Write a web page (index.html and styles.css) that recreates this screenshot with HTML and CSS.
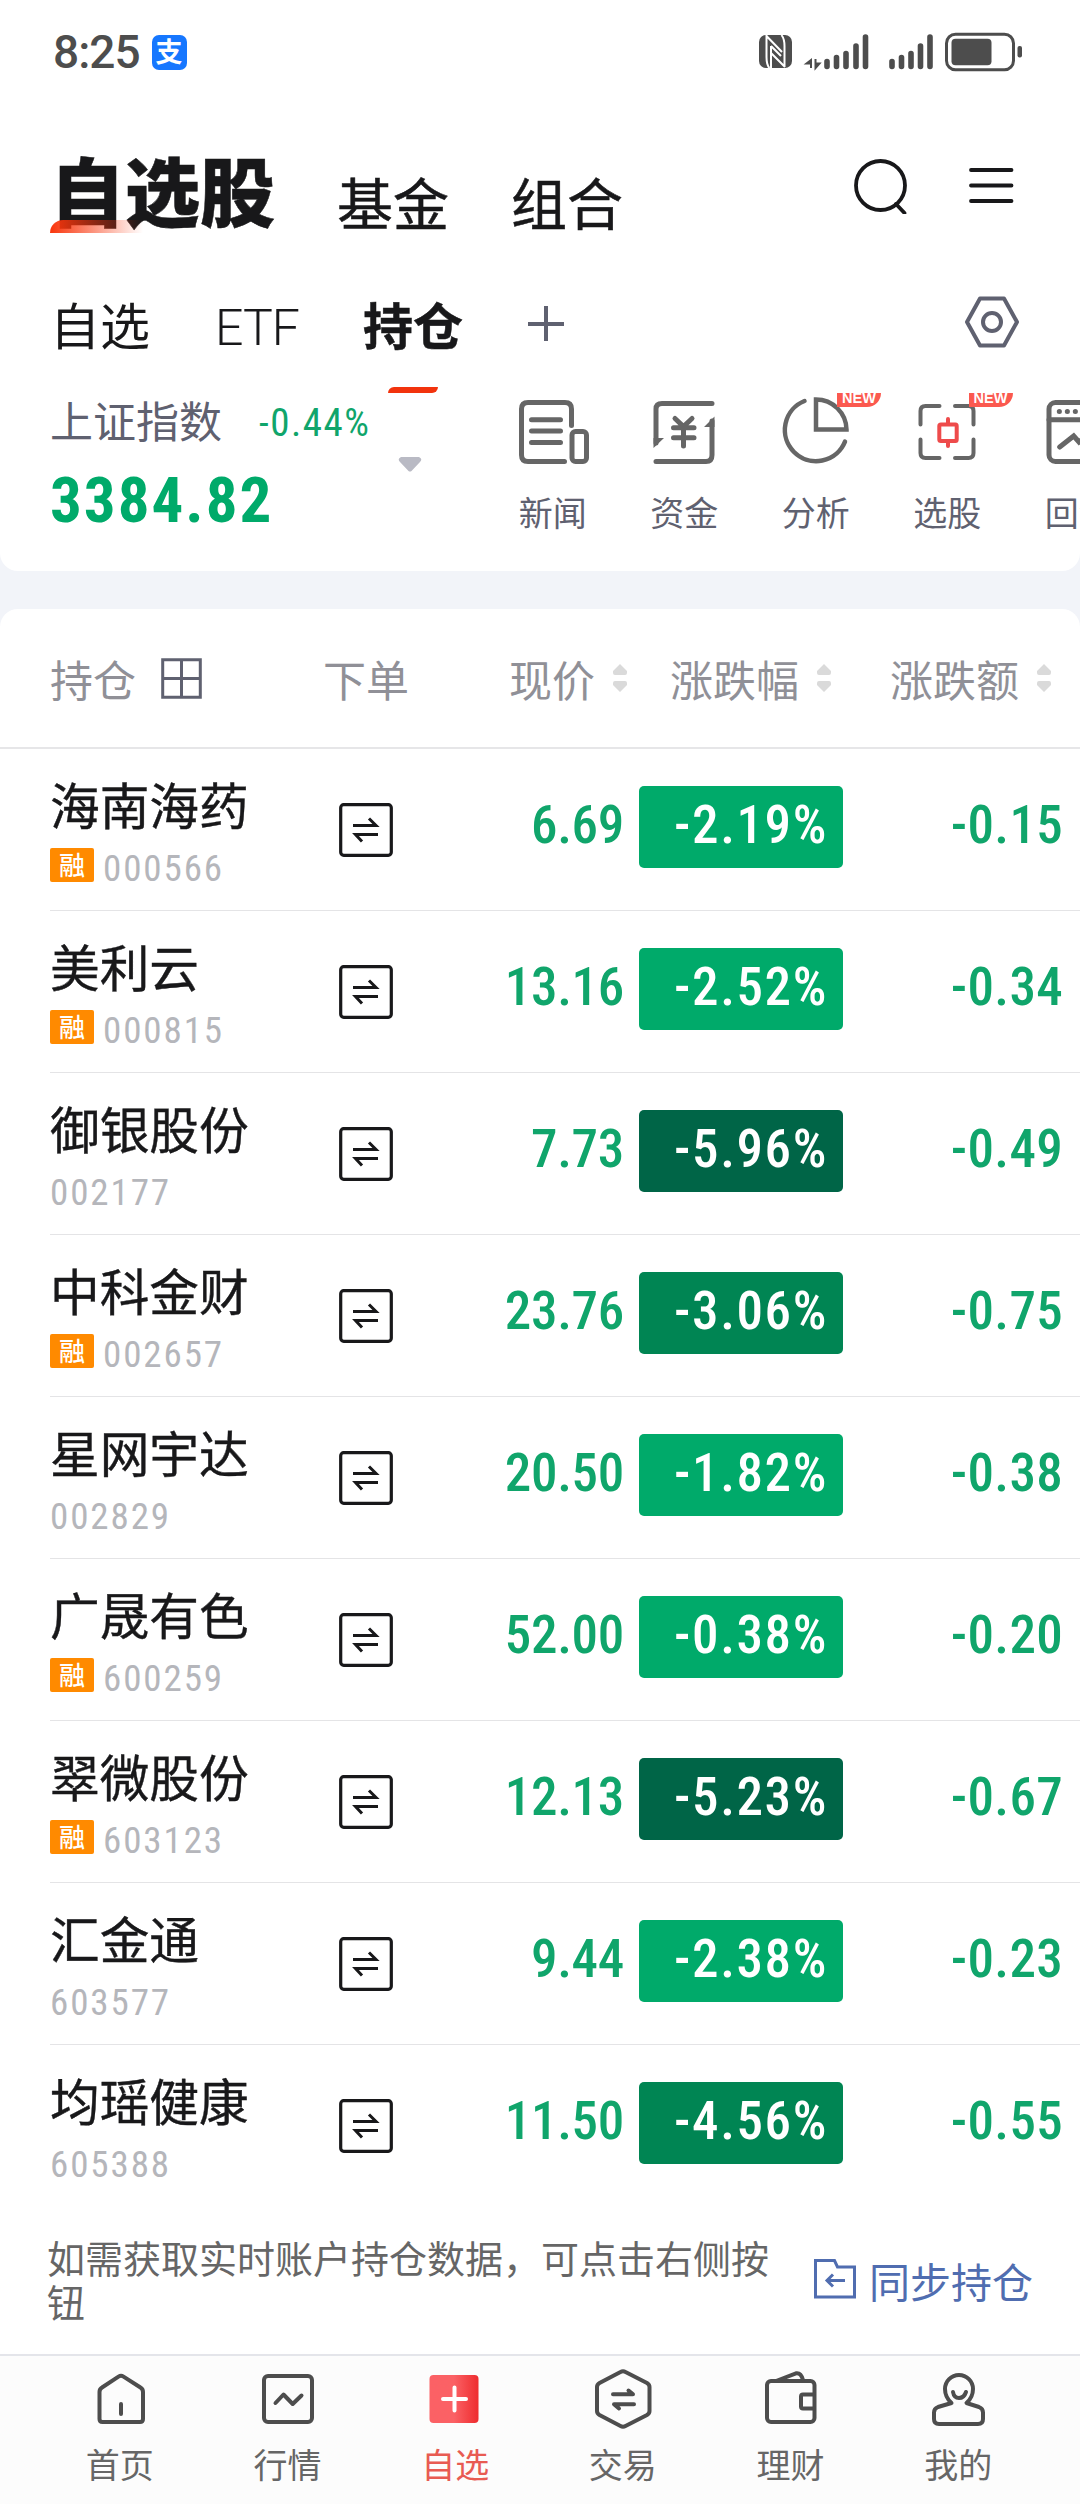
FILE: index.html
```
<!DOCTYPE html>
<html lang="zh-CN">
<head>
  <meta charset="UTF-8">
  <meta name="viewport" content="width=device-width, initial-scale=1.0">
  <title>自选股 - 持仓</title>
  <link rel="stylesheet" href="styles.css">
</head>
<body>
  <!-- 公用图标 -->
  <svg class="sprite" width="0" height="0">
    <symbol id="swap" viewBox="0 0 54 54">
      <rect x="1.7" y="1.7" width="50.6" height="50.6" rx="3" fill="none" stroke="#18181a" stroke-width="3.2"/>
      <path d="M14 22.5H37L30 15.5M39 31.5H16.500L23 38.500" fill="none" stroke="#18181a" stroke-width="3"/>
    </symbol>
    <symbol id="sort" viewBox="0 0 14 28">
      <path d="M7 0L14 7V9Q14 11 12 11H2Q0 11 0 9V7ZM7 28L14 21V19Q14 17 12 17H2Q0 17 0 19V21Z" fill="#dadada"/>
    </symbol>
  </svg>

  <div class="top-card">
    <!-- 状态栏 -->
    <div class="status-bar">
      <span class="time">8:25</span>
      <span class="alipay">支</span>
      <svg class="status-icons" width="270" height="40" viewBox="0 0 270 40">
        <rect x="5" y="3" width="33" height="33" rx="7" fill="#4d4d4d"/>
        <path d="M12.500 3V25Q12.500 33 15.500 36M12.500 4L28 20M17 36V14M17 14L27 24M17 21L31 35M30.500 35V14Q30.500 7 27.500 3" fill="none" stroke="#fff" stroke-width="2"/>
        <path d="M57 36V28L52.500 31.500H57M61.500 27V36L65.500 31.500H61.500" fill="#4d4d4d" stroke="#4d4d4d" stroke-width="2"/>
        <path d="M73 29.500V34.500M82.500 25.500V34.500M92 21.500V34.500M102 14V34.500M111.500 5V34.500M138 29.500V34.500M147.500 25.500V34.500M157 21.500V34.500M166.500 14V34.500M176 5V34.500" stroke="#4d4d4d" stroke-width="5.600" stroke-linecap="round"/>
        <rect x="192.500" y="2.200" width="67" height="35.600" rx="9" fill="none" stroke="#4d4d4d" stroke-width="3"/>
        <rect x="197.500" y="6.800" width="40" height="26.500" rx="4" fill="#4d4d4d"/>
        <rect x="263.500" y="14" width="4.500" height="11.500" rx="2" fill="#4d4d4d"/>
      </svg>
    </div>

    <!-- 标题栏 -->
    <div class="title-bar">
      <span class="title active">自选股</span>
      <span class="title">基金</span>
      <span class="title">组合</span>
      <svg class="title-icons" width="166" height="56" viewBox="0 0 166 56">
        <circle cx="30.500" cy="27.500" r="24.500"/>
        <path d="M46 46L54.500 55M121 12H161.500M121 27.500H161.500M121 43H161.500"/>
      </svg>
    </div>

    <!-- 分组 -->
    <div class="tabs">
      <span class="tab">自选</span>
      <span class="tab etf">ETF</span>
      <span class="tab active">持仓</span>
      <svg class="add" width="36" height="36" viewBox="0 0 36 36"><path d="M0 19H36M18 1V36"/></svg>
      <svg class="setting" width="56" height="52" viewBox="0 0 56 52">
        <path d="M16 2.500H40L53 26L40 49.500H16L3 26Z"/>
        <circle cx="28" cy="26" r="9"/>
      </svg>
    </div>

    <!-- 指数和工具 -->
    <div class="index-row">
      <div class="index">
        <div class="index-name">上证指数<span class="index-rate">-0.44%</span></div>
        <div class="index-value">3384.82</div>
      </div>
      <svg class="arrow" width="24" height="15" viewBox="0 0 24 15"><path d="M3 0H21Q25 2 22 5L13.500 14Q12 15 10.500 14L2 5Q-1 2 3 0Z" fill="#b9bac4"/></svg>
      <div class="tools">
        <div class="tool">
          <svg width="80" height="80" viewBox="0 0 80 80">
            <path d="M58.500 32.500V16Q58.500 9.500 52 9.500H15Q8.500 9.500 8.500 16V62Q8.500 68.500 15 68.500H51.500M18.500 26.700H47.500M18.500 38H47.500M18.500 49.500H47.500"/>
            <rect x="59" y="38.500" width="14.500" height="30" rx="3.500"/>
          </svg>
          <span>新闻</span>
        </div>
        <div class="tool">
          <svg width="80" height="80" viewBox="0 0 80 80">
            <path d="M68 10.500H18Q12 10.500 12 16V50M12 68.500H62Q68 68.500 68 62V28M31 25.500L39.500 33.500L48 25.500M39.500 33.500V53M29.500 34.700H50M29.500 44.700H50"/>
            <path d="M9.500 45H20L9.500 55ZM70.500 23.500V34H60Z" class="solid"/>
          </svg>
          <span>资金</span>
        </div>
        <div class="tool">
          <svg width="80" height="80" viewBox="0 0 80 80">
            <path d="M28.500 8A31.200 31.200 0 1 0 69 48.700M40 6.500V36.500H70.500A30.500 30.500 0 0 0 40 6.500Z" stroke-width="4.500"/>
          </svg>
          <span>分析</span>
          <b class="new">NEW</b>
        </div>
        <div class="tool">
          <svg width="80" height="80" viewBox="0 0 80 80">
            <path d="M32.500 13H18.500Q13.500 13 13.500 18V31.500M48 13H61.500Q66.500 13 66.500 18V31.500M13.500 46.500V60Q13.500 65 18.500 65H32.500M48 65H61.500Q66.500 65 66.500 60V46.500" stroke-width="4"/>
            <path d="M41 26V31.500M41 48V53M34 31.500H48.500Q49.700 31.500 49.700 33V46.500Q49.700 48 48.500 48H34Q32.300 48 32.300 46.500V33Q32.300 31.500 34 31.500Z" class="red" stroke-width="4"/>
          </svg>
          <span>选股</span>
          <b class="new">NEW</b>
        </div>
        <div class="tool">
          <svg width="80" height="80" viewBox="0 0 80 80">
            <rect x="10" y="9.500" width="60" height="59" rx="6.500"/>
            <path d="M10 26.700H70M20.700 54L34.700 43L40 49L56 36M20.300 18.600H20.400M28.300 18.600H28.400M36.300 18.600H36.400"/>
          </svg>
          <span>回测</span>
        </div>
      </div>
    </div>
  </div>

  <!-- 持仓列表 -->
  <div class="list-card">
    <div class="list-head">
      <div>持仓<svg class="grid-icon" width="41" height="41" viewBox="0 0 41 41"><path d="M1.700 1.700H39.300V39.300H1.700ZM20.500 1.700V39.300M1.700 20.500H39.300"/></svg></div>
      <div class="center">下单</div>
      <div class="right">现价<svg width="14" height="28"><use href="#sort"/></svg></div>
      <div class="right">涨跌幅<svg width="14" height="28"><use href="#sort"/></svg></div>
      <div class="right">涨跌额<svg width="14" height="28"><use href="#sort"/></svg></div>
    </div>

    <div class="row">
      <div class="stock"><div class="name">海南海药</div><div class="code"><i>融</i>000566</div></div>
      <svg class="swap" width="54" height="54"><use href="#swap"/></svg>
      <div class="price">6.69</div>
      <div class="rate">-2.19%</div>
      <div class="diff">-0.15</div>
    </div>
    <div class="row">
      <div class="stock"><div class="name">美利云</div><div class="code"><i>融</i>000815</div></div>
      <svg class="swap" width="54" height="54"><use href="#swap"/></svg>
      <div class="price">13.16</div>
      <div class="rate">-2.52%</div>
      <div class="diff">-0.34</div>
    </div>
    <div class="row">
      <div class="stock"><div class="name">御银股份</div><div class="code">002177</div></div>
      <svg class="swap" width="54" height="54"><use href="#swap"/></svg>
      <div class="price">7.73</div>
      <div class="rate deep">-5.96%</div>
      <div class="diff">-0.49</div>
    </div>
    <div class="row">
      <div class="stock"><div class="name">中科金财</div><div class="code"><i>融</i>002657</div></div>
      <svg class="swap" width="54" height="54"><use href="#swap"/></svg>
      <div class="price">23.76</div>
      <div class="rate mid">-3.06%</div>
      <div class="diff">-0.75</div>
    </div>
    <div class="row">
      <div class="stock"><div class="name">星网宇达</div><div class="code">002829</div></div>
      <svg class="swap" width="54" height="54"><use href="#swap"/></svg>
      <div class="price">20.50</div>
      <div class="rate">-1.82%</div>
      <div class="diff">-0.38</div>
    </div>
    <div class="row">
      <div class="stock"><div class="name">广晟有色</div><div class="code"><i>融</i>600259</div></div>
      <svg class="swap" width="54" height="54"><use href="#swap"/></svg>
      <div class="price">52.00</div>
      <div class="rate">-0.38%</div>
      <div class="diff">-0.20</div>
    </div>
    <div class="row">
      <div class="stock"><div class="name">翠微股份</div><div class="code"><i>融</i>603123</div></div>
      <svg class="swap" width="54" height="54"><use href="#swap"/></svg>
      <div class="price">12.13</div>
      <div class="rate deep">-5.23%</div>
      <div class="diff">-0.67</div>
    </div>
    <div class="row">
      <div class="stock"><div class="name">汇金通</div><div class="code">603577</div></div>
      <svg class="swap" width="54" height="54"><use href="#swap"/></svg>
      <div class="price">9.44</div>
      <div class="rate">-2.38%</div>
      <div class="diff">-0.23</div>
    </div>
    <div class="row">
      <div class="stock"><div class="name">均瑶健康</div><div class="code">605388</div></div>
      <svg class="swap" width="54" height="54"><use href="#swap"/></svg>
      <div class="price">11.50</div>
      <div class="rate mid">-4.56%</div>
      <div class="diff">-0.55</div>
    </div>

    <div class="notice">
      <p>如需获取实时账户持仓数据，可点击右侧按钮</p>
      <a class="sync">
        <svg width="42" height="40" viewBox="0 0 42 40"><path d="M1.500 1.500H20.500L23.500 8H40.500V38H1.500ZM31 21.500H13M19 15.500L13 21.500L19 27.500"/></svg>
        同步持仓
      </a>
    </div>
  </div>

  <!-- 底部导航 -->
  <div class="nav">
    <div class="nav-item">
      <svg width="64" height="64" viewBox="0 0 64 64"><path d="M30.500 8.600Q33 7 35.500 8.600L52.500 19.500Q55 21 55 24V51Q55 54 52 54H14.500Q11.500 54 11.500 51V24Q11.500 21 14 19.500ZM33 36V46"/></svg>
      <span>首页</span>
    </div>
    <div class="nav-item">
      <svg width="64" height="64" viewBox="0 0 64 64"><rect x="8" y="8" width="48" height="46" rx="4"/><path d="M19.500 35L27.500 26.500L36.700 36L45.500 27.500"/></svg>
      <span>行情</span>
    </div>
    <div class="nav-item active">
      <svg width="64" height="64" viewBox="0 0 64 64">
        <defs><linearGradient id="red"><stop offset="0.500" stop-color="#fb6165"/><stop offset="1" stop-color="#ee2c2e"/></linearGradient></defs>
        <rect x="6.500" y="7" width="49" height="48" rx="4" fill="url(#red)" stroke="none"/>
        <path d="M20 31H43M31.500 19.500V42.500" stroke="#fff"/>
      </svg>
      <span>自选</span>
    </div>
    <div class="nav-item">
      <svg width="64" height="64" viewBox="0 0 64 64"><path d="M29.500 4Q32 2.500 34.500 4L56 15Q58.500 16.500 58.500 19V43Q58.500 45.500 56 47L34.500 58Q32 59.500 29.500 58L8.500 47Q6 45.500 6 43V19Q6 16.500 8.500 15ZM22 26.300H42L37.500 22.500M43 36.300H23L28 40.500"/></svg>
      <span>交易</span>
    </div>
    <div class="nav-item">
      <svg width="64" height="64" viewBox="0 0 64 64"><rect x="8" y="13" width="47.500" height="41" rx="4"/><path d="M55 26.500H44Q42 26.500 42 28.500V38.500Q42 40.500 44 40.500H55M17 13L37 5.300Q42 4.500 44 12"/></svg>
      <span>理财</span>
    </div>
    <div class="nav-item">
      <svg width="64" height="64" viewBox="0 0 64 64"><path d="M25.500 35C21 31 19 27 19 21A14 14 0 0 1 47 21C47 27 45 31 40.500 35L53 39Q57 40.500 57 44.500V51Q57 56 52 56H13Q8 56 8 51V44.500Q8 40.500 12 39ZM27 24Q28 30 33 30Q38 30 40 24"/></svg>
      <span>我的</span>
    </div>
  </div>
</body>
</html>
```
FILE: styles.css
```
* { box-sizing: border-box; margin: 0; padding: 0; }
body {
  width: 1080px;
  background: #f2f4f9;
  font-family: "Noto Sans CJK SC", sans-serif;
  color: #18181a;
  overflow-x: hidden;
}
svg { display: block; flex: none; }
.sprite { position: absolute; }

.top-card {
  height: 571px;
  background: #fff;
  border-radius: 0 0 18px 18px;
}

/* 状态栏 */
.status-bar {
  height: 104px;
  padding: 0 56px 0 53px;
  display: flex;
  align-items: center;
}
.time {
  font-family: Roboto, sans-serif;
  font-weight: 500;
  font-size: 46px;
  letter-spacing: -1px;
  color: #4d4d4d;
}
.alipay {
  width: 35px;
  height: 35px;
  margin-left: 12px;
  border-radius: 7px;
  background: #1677ff;
  color: #fff;
  font-size: 27px;
  font-weight: 700;
  line-height: 32px;
  text-align: center;
}
.status-icons { margin-left: auto; }

/* 标题栏 */
.title-bar {
  height: 160px;
  padding: 0 64px 0 50px;
  display: flex;
  align-items: flex-start;
  gap: 62px;
}
.title {
  margin-top: 69px;
  font-size: 56px;
  line-height: 56px;
  -webkit-text-stroke: 0.5px #18181a;
}
.title.active {
  position: relative;
  margin-top: 47px;
  font-size: 75px;
  line-height: 75px;
  font-weight: 900;
}
.title.active::after {
  content: "";
  position: absolute;
  left: 0;
  bottom: -7px;
  width: 93px;
  height: 13px;
  border-radius: 13px 0 0 0;
  background: linear-gradient(90deg, #f9350c, rgba(249, 53, 12, 0));
}
.title-icons {
  margin: 54px 0 0 auto;
  fill: none;
  stroke: #18181a;
  stroke-width: 3.8;
  stroke-linecap: round;
}

/* 分组 */
.tabs {
  height: 116px;
  padding: 2px 60px 0 50px;
  display: flex;
  align-items: center;
  gap: 65px;
}
.tab {
  position: relative;
  font-size: 50px;
  line-height: 50px;
}
.etf {
  margin-top: 9px;
  font-family: Roboto, sans-serif;
  font-weight: 300;
  letter-spacing: -1px;
}
.tab.active {
  margin-left: -1px;
  font-weight: 700;
  -webkit-text-stroke: 0.5px #18181a;
}
.tab.active::after {
  content: "";
  position: absolute;
  left: 25px;
  top: 89px;
  width: 50px;
  height: 6px;
  border-radius: 6px 0 6px 0;
  background: #f2330d;
}
.add, .setting {
  fill: none;
  stroke: #5f6170;
  stroke-width: 4;
  stroke-linejoin: round;
}
.setting { margin: -3px 0 0 auto; }

/* 指数 */
.index-row {
  height: 191px;
  padding-left: 50px;
  display: flex;
  align-items: flex-start;
}
.index { width: 348px; padding-top: 14px; }
.index-name {
  display: flex;
  align-items: center;
  font-size: 43px;
  line-height: 50px;
  color: #5f6170;
}
.index-rate {
  margin: 7px 0 0 37px;
  font-family: "Roboto Condensed", Roboto, sans-serif;
  font-size: 39px;
  line-height: 40px;
  letter-spacing: 1.5px;
  color: #10a56b;
}
.index-value {
  margin-top: 24px;
  font-family: "Roboto Condensed", Roboto, sans-serif;
  font-weight: 700;
  font-size: 63px;
  line-height: 66px;
  letter-spacing: 2px;
  color: #00aa6a;
}
.arrow { margin-top: 77px; }
.tools {
  flex: 1;
  margin: 13px 0 0 65px;
  display: flex;
  overflow: hidden;
}
.tool {
  position: relative;
  flex: none;
  width: 131.5px;
  padding-bottom: 16px;
  display: flex;
  flex-direction: column;
  align-items: center;
  font-size: 34px;
  line-height: 40px;
  color: #5f6170;
}
.tool svg {
  margin-bottom: 19px;
  fill: none;
  stroke: #666;
  stroke-width: 5;
  stroke-linecap: round;
}
.tool .solid { fill: #666; stroke: none; }
.tool .red { stroke: #ee4b4b; }
.new {
  position: absolute;
  left: 87px;
  top: -8px;
  width: 44px;
  height: 22px;
  padding-left: 5px;
  border-radius: 0 0 14px 0;
  background: #fb594f;
  color: #fff;
  font: bold 14.5px/27px "Liberation Sans", sans-serif;
}

/* 持仓列表 */
.list-card {
  margin-top: 38px;
  height: 1745px;
  background: #fff;
  border-radius: 18px 18px 0 0;
}
.list-head {
  height: 140px;
  padding-left: 50px;
  display: grid;
  grid-template-columns: 232px 168px 177px 204px 220px;
  border-bottom: 2px solid #e6e6e8;
  font-size: 43px;
  line-height: 136px;
  color: #909097;
}
.list-head div {
  display: flex;
  align-items: center;
}
.list-head .center { justify-content: center; }
.list-head .right { justify-content: flex-end; }
.list-head .right svg { margin-left: 18px; }
.grid-icon {
  margin-left: 25px;
  fill: none;
  stroke: #5f6170;
  stroke-width: 3;
}
.row {
  height: 162px;
  margin-left: 50px;
  display: grid;
  grid-template-columns: 232px 168px 174px 219px 221px;
  align-items: start;
  border-bottom: 1px solid #e4e4e6;
}
.row:nth-child(10) { border-bottom: none; }
.name {
  margin-top: 30px;
  font-size: 49.7px;
  line-height: 49px;
  -webkit-text-stroke: 0.4px #18181a;
}
.code {
  height: 34px;
  margin-top: 20px;
  display: flex;
  font-family: "Roboto Condensed", Roboto, sans-serif;
  font-size: 37px;
  line-height: 41px;
  letter-spacing: 1.9px;
  color: #b5b6bb;
}
.code i {
  width: 44px;
  height: 34px;
  margin-right: 9px;
  border-radius: 2px;
  background: #ff8a00;
  color: #fff;
  font: normal 500 26px/31px "Noto Sans CJK SC", sans-serif;
  letter-spacing: 0;
  text-align: center;
}
.swap { margin: 54px auto 0; }
.price, .rate, .diff {
  height: 82px;
  margin-top: 37px;
  font-family: "Roboto Condensed", Roboto, sans-serif;
  font-weight: 500;
  font-size: 53px;
  line-height: 79px;
  text-align: right;
  color: #10a56b;
}
.price { letter-spacing: -0.3px; }
.diff {
  padding-right: 1px;
  letter-spacing: 0.3px;
}
.rate {
  margin-left: 15px;
  padding-right: 15px;
  border-radius: 5px;
  background: #00aa6a;
  color: #fff;
  letter-spacing: 1.6px;
}
.rate.mid { background: #008553; }
.rate.deep { background: #006547; }

.notice {
  padding: 28px 47px 0;
  display: flex;
  justify-content: space-between;
}
.notice p {
  width: 724px;
  font-size: 38px;
  line-height: 44px;
  color: #666;
}
.sync {
  height: 90px;
  display: flex;
  align-items: center;
  gap: 13px;
  font-size: 41px;
  line-height: 41px;
  color: #506db0;
}
.sync svg {
  margin-top: -2px;
  fill: none;
  stroke: #506db0;
  stroke-width: 3;
}

/* 底部导航 */
.nav {
  height: 150px;
  padding: 12px 38px 0 36px;
  display: flex;
  background: #fcfcfc;
  border-top: 2px solid #e4e5ea;
}
.nav-item {
  flex: 1;
  display: flex;
  flex-direction: column;
  align-items: center;
  font-size: 34px;
  line-height: 40px;
  color: #666;
}
.nav-item svg {
  margin-bottom: 12px;
  fill: none;
  stroke: #4d4d4d;
  stroke-width: 4;
  stroke-linecap: round;
  stroke-linejoin: round;
}
.nav-item.active { color: #e85b52; }
```
